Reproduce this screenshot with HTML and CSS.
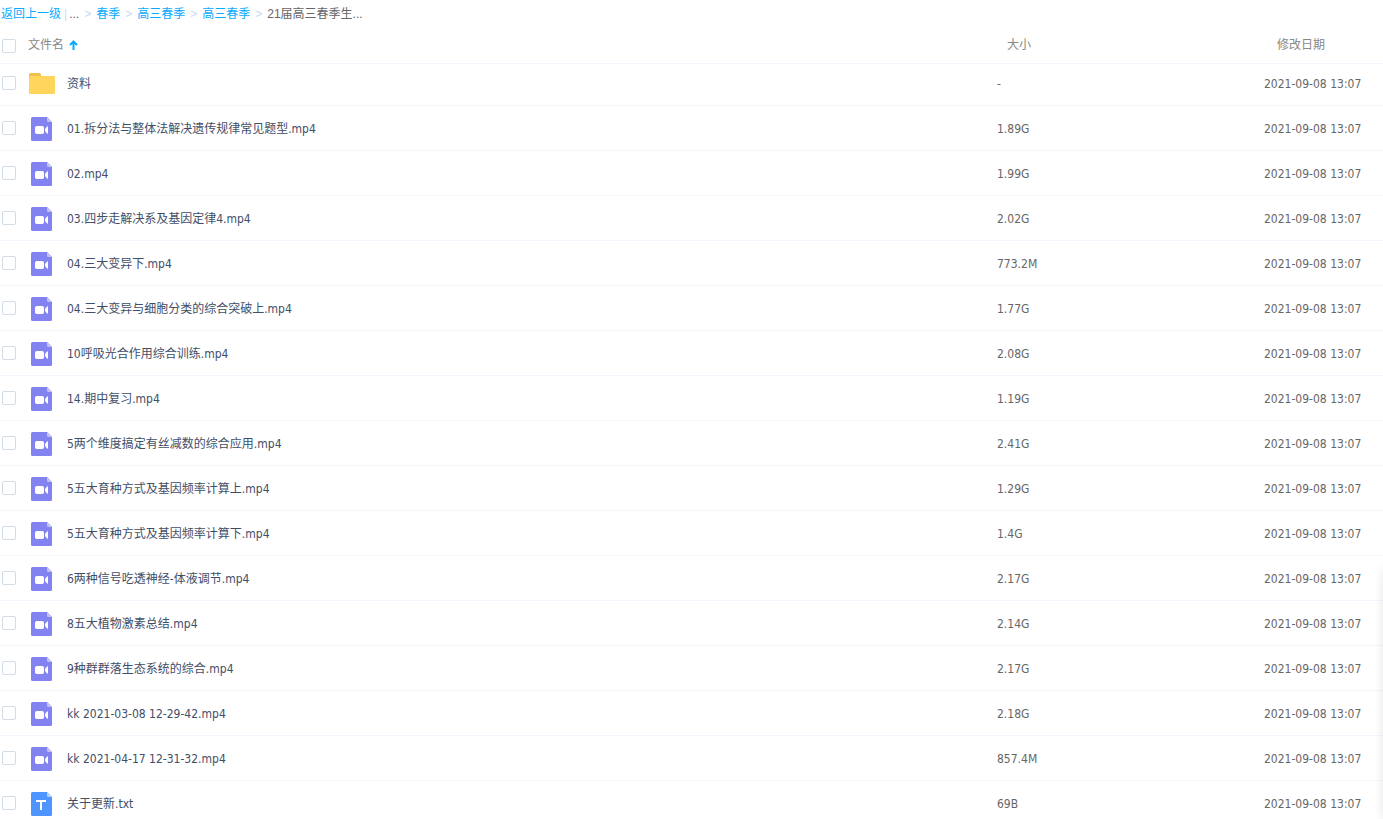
FILE: index.html
```
<!DOCTYPE html>
<html lang="zh-CN">
<head>
  <meta charset="UTF-8">
  <meta name="viewport" content="width=device-width, initial-scale=1.0">
  <title>21届高三春季生物</title>
  <link rel="stylesheet" href="styles.css">
</head>
<body>
  <!-- Icon sprite -->
  <svg class="sprite" aria-hidden="true">
    <symbol id="icon-folder" viewBox="0 0 26 21">
      <path fill="#ecc04b" d="M0 1.500Q0 0 1.500 0H10.500Q12 0 12 1.500V5H0Z"/>
      <path fill="#ffd65b" d="M0 3H25Q26 3 26 4V20Q26 21 25 21H1Q0 21 0 20Z"/>
    </symbol>
    <symbol id="icon-video" viewBox="0 0 21 24">
      <path fill="#8283f0" d="M1.500 0H16L21 5V22.500Q21 24 19.500 24H1.500Q0 24 0 22.500V1.500Q0 0 1.500 0Z"/>
      <path fill="#c1c1f8" d="M16 0L21 5H17.200Q16 5 16 3.800Z"/>
      <rect x="4" y="9" width="9" height="8" rx="1.800" fill="#fff"/>
      <path fill="#fff" d="M14 12L16 9.600Q17 8.800 17 10V16Q17 17.200 16 16.400L14 14Z"/>
    </symbol>
    <symbol id="icon-text" viewBox="0 0 21 24">
      <path fill="#4f95ff" d="M1.500 0H16L21 5V22.500Q21 24 19.500 24H1.500Q0 24 0 22.500V1.500Q0 0 1.500 0Z"/>
      <path fill="#b1d1ff" d="M16 0L21 5H17.200Q16 5 16 3.800Z"/>
      <path stroke="#fff" stroke-width="2" fill="none" d="M5 9H15M10 9V18"/>
    </symbol>
  </svg>

  <nav class="breadcrumb" aria-label="路径">
    <a href="#">返回上一级</a>
    <span class="divider">|</span>
    <span class="crumb">...</span>
    <span class="arrow">&gt;</span>
    <a href="#">春季</a>
    <span class="arrow">&gt;</span>
    <a href="#">高三春季</a>
    <span class="arrow">&gt;</span>
    <a href="#">高三春季</a>
    <span class="arrow">&gt;</span>
    <span class="crumb">21届高三春季生...</span>
  </nav>

  <table class="file-list">
    <colgroup>
      <col class="w-check">
      <col class="w-icon">
      <col>
      <col class="w-size">
      <col class="w-date">
    </colgroup>
    <thead>
      <tr>
        <th class="col-check"><input type="checkbox" aria-label="全选"></th>
        <th class="col-name" colspan="2">
          <button type="button" class="sort">文件名
            <svg width="9" height="10" viewBox="0 0 9 10" aria-hidden="true"><path fill="none" stroke="#09aaff" stroke-width="2" d="M4.500 10V1.500M1 5L4.500 1.500L8 5"/></svg>
          </button>
        </th>
        <th class="col-size">大小</th>
        <th class="col-date">修改日期</th>
      </tr>
    </thead>
    <tbody id="files"></tbody>
  </table>

  <aside class="side-panel"></aside>

  <script>
    const files = [
      ['folder', '资料', '-'],
      ['video', '01.拆分法与整体法解决遗传规律常见题型.mp4', '1.89G'],
      ['video', '02.mp4', '1.99G'],
      ['video', '03.四步走解决系及基因定律4.mp4', '2.02G'],
      ['video', '04.三大变异下.mp4', '773.2M'],
      ['video', '04.三大变异与细胞分类的综合突破上.mp4', '1.77G'],
      ['video', '10呼吸光合作用综合训练.mp4', '2.08G'],
      ['video', '14.期中复习.mp4', '1.19G'],
      ['video', '5两个维度搞定有丝减数的综合应用.mp4', '2.41G'],
      ['video', '5五大育种方式及基因频率计算上.mp4', '1.29G'],
      ['video', '5五大育种方式及基因频率计算下.mp4', '1.4G'],
      ['video', '6两种信号吃透神经-体液调节.mp4', '2.17G'],
      ['video', '8五大植物激素总结.mp4', '2.14G'],
      ['video', '9种群群落生态系统的综合.mp4', '2.17G'],
      ['video', 'kk 2021-03-08 12-29-42.mp4', '2.18G'],
      ['video', 'kk 2021-04-17 12-31-32.mp4', '857.4M'],
      ['text', '关于更新.txt', '69B']
    ];

    // Fill the file table
    document.getElementById('files').innerHTML = files.map(([type, name, size], i) => `
      <tr class="row-${type}">
        <td class="col-check"><input type="checkbox" id="file-${i}"></td>
        <td class="col-icon"><svg class="icon-${type}" aria-hidden="true"><use href="#icon-${type}"/></svg></td>
        <td class="col-name"><label for="file-${i}">${name}</label></td>
        <td class="col-size">${size}</td>
        <td class="col-date">2021-09-08 13:07</td>
      </tr>`).join('');
  </script>
</body>
</html>
```
FILE: styles.css
```
* {
  box-sizing: border-box;
}

body {
  height: 100vh;
  margin: 0;
  overflow: hidden;
  background: #fff;
  color: #666;
  font-family: "DejaVu Sans Condensed", "Noto Sans CJK SC", sans-serif;
  font-size: 12px;
  line-height: 16px;
}

.sprite {
  display: none;
}

.breadcrumb {
  display: flex;
  align-items: center;
  height: 28px;
  padding-left: 1px;
  font-family: "Liberation Sans", "Noto Sans CJK SC", sans-serif;
  white-space: nowrap;
}

.breadcrumb a {
  color: #09aaff;
  text-decoration: none;
}

.divider {
  margin: 0 2px 0 3px;
  color: #c4dbfe;
}

.arrow {
  margin: 0 5px;
  color: #c4d8f4;
}

.file-list {
  width: 100%;
  border-collapse: separate;
  border-spacing: 0;
  table-layout: fixed;
}

.w-check {
  width: 28px;
}

.w-icon {
  width: 39px;
}

.w-size {
  width: 267px;
}

.w-date {
  width: 119px;
}

.file-list th,
.file-list td {
  height: 45px;
  padding: 2px 0 0;
  border-bottom: 1px solid #f2f6fd;
  text-align: left;
  font-weight: normal;
  white-space: nowrap;
}

.file-list th {
  height: 36px;
  padding: 0 0 2px;
  color: #888;
}

.file-list .row-folder td {
  height: 42px;
  padding: 0 0 2px;
}

.file-list .col-check,
.file-list .row-folder .col-check {
  padding: 0 0 0 2px;
}

.file-list .row-folder .col-check {
  padding-bottom: 3px;
}

.file-list th.col-size {
  padding-left: 10px;
}

.file-list th.col-date {
  padding-left: 13px;
}

.col-name label {
  color: #424e67;
}

input[type="checkbox"] {
  appearance: none;
  display: block;
  width: 14px;
  height: 14px;
  margin: 0;
  border: 1px solid #d3dbe5;
  border-radius: 2px;
  background: #fff;
}

input[type="checkbox"]:checked {
  border-color: #09aaff;
  background: #09aaff;
}

.sort {
  display: flex;
  align-items: center;
  gap: 5px;
  padding: 0;
  border: 0;
  background: none;
  color: inherit;
  font: inherit;
}

.col-icon svg {
  display: block;
  width: 21px;
  height: 24px;
  margin-left: 3px;
}

.col-icon .icon-folder {
  width: 26px;
  height: 21px;
  margin-left: 1px;
}

/* Panel parked just outside the window, only its shadow shows */
.side-panel {
  position: fixed;
  top: 570px;
  bottom: 0;
  left: 100%;
  width: 200px;
  box-shadow: 0 0 10px rgba(0, 0, 0, 0.1);
}
```
